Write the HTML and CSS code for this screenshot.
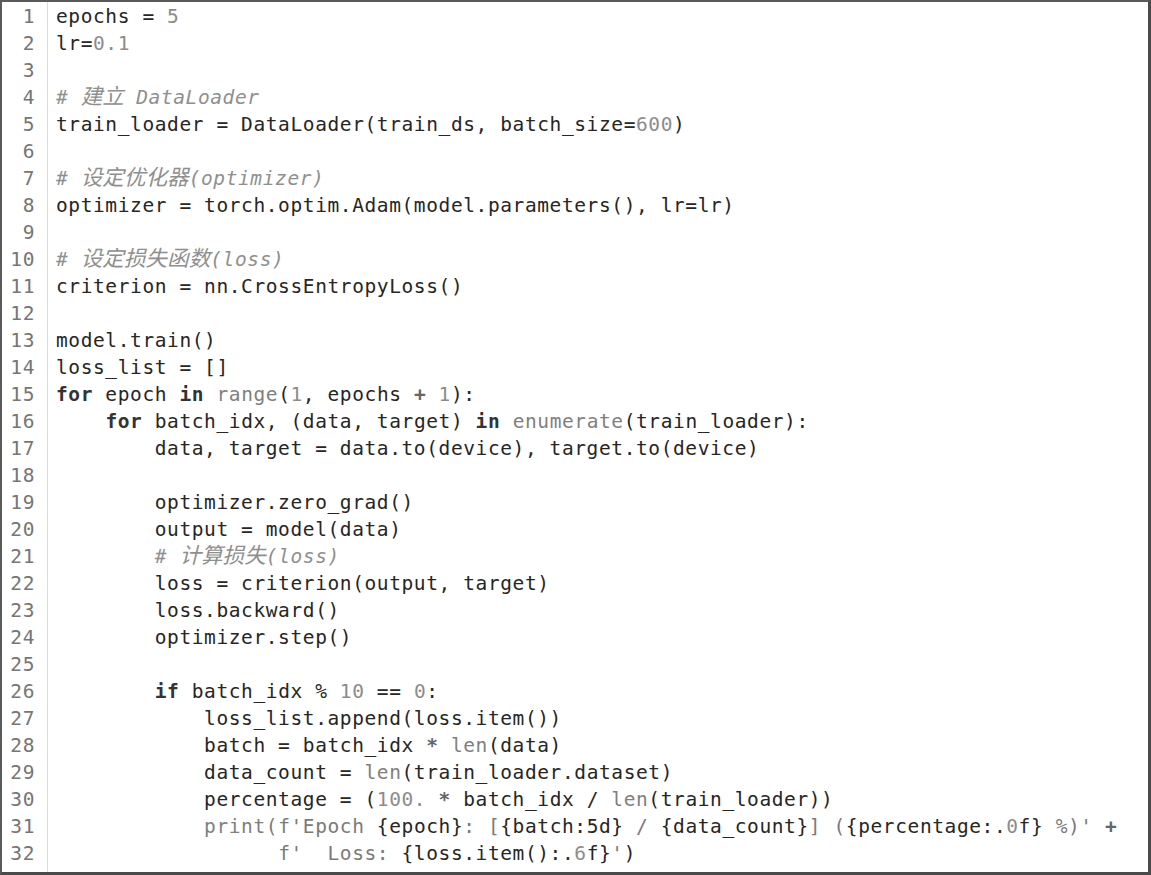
FILE: index.html
```html
<!DOCTYPE html>
<html lang="zh">
<head>
<meta charset="utf-8">
<title>code</title>
<link rel="stylesheet" href="styles.css">
</head>
<body>
<div class="frame">
  <div class="gutter">
    <div>1</div><div>2</div><div>3</div><div>4</div><div>5</div><div>6</div><div>7</div><div>8</div>
    <div>9</div><div>10</div><div>11</div><div>12</div><div>13</div><div>14</div><div>15</div><div>16</div>
    <div>17</div><div>18</div><div>19</div><div>20</div><div>21</div><div>22</div><div>23</div><div>24</div>
    <div>25</div><div>26</div><div>27</div><div>28</div><div>29</div><div>30</div><div>31</div><div>32</div>
  </div>
  <div class="code">
<div class="ln">epochs = <span class="n">5</span></div>
<div class="ln">lr=<span class="n">0.1</span></div>
<div class="ln"> </div>
<div class="ln"><span class="c"># <span class="cjk">建立</span> DataLoader</span></div>
<div class="ln">train_loader = DataLoader(train_ds, batch_size=<span class="n">600</span>)</div>
<div class="ln"> </div>
<div class="ln"><span class="c"># <span class="cjk">设定优化器</span>(optimizer)</span></div>
<div class="ln">optimizer = torch.optim.Adam(model.parameters(), lr=lr)</div>
<div class="ln"> </div>
<div class="ln"><span class="c"># <span class="cjk">设定损失函数</span>(loss)</span></div>
<div class="ln">criterion = nn.CrossEntropyLoss()</div>
<div class="ln"> </div>
<div class="ln">model.train()</div>
<div class="ln">loss_list = []</div>
<div class="ln"><span class="k">for</span> epoch <span class="k">in</span> <span class="b">range</span>(<span class="n">1</span>, epochs <span class="o">+</span> <span class="n">1</span>):</div>
<div class="ln">    <span class="k">for</span> batch_idx, (data, target) <span class="k">in</span> <span class="b">enumerate</span>(train_loader):</div>
<div class="ln">        data, target = data.to(device), target.to(device)</div>
<div class="ln"> </div>
<div class="ln">        optimizer.zero_grad()</div>
<div class="ln">        output = model(data)</div>
<div class="ln">        <span class="c"># <span class="cjk">计算损失</span>(loss)</span></div>
<div class="ln">        loss = criterion(output, target)</div>
<div class="ln">        loss.backward()</div>
<div class="ln">        optimizer.step()</div>
<div class="ln"> </div>
<div class="ln">        <span class="k">if</span> batch_idx % <span class="n">10</span> == <span class="n">0</span>:</div>
<div class="ln">            loss_list.append(loss.item())</div>
<div class="ln">            batch = batch_idx <span class="o">*</span> <span class="b">len</span>(data)</div>
<div class="ln">            data_count = <span class="b">len</span>(train_loader.dataset)</div>
<div class="ln">            percentage = (<span class="n">100.</span> <span class="o">*</span> batch_idx / <span class="b">len</span>(train_loader))</div>
<div class="ln">            <span class="b">print</span><span class="s">(f'Epoch </span>{epoch}<span class="s">: [</span>{batch:5d}<span class="s"> / </span>{data_count}<span class="s">] (</span>{percentage:.<span class="n">0</span>f}<span class="s"> %)'</span> <span class="o">+</span></div>
<div class="ln">                  <span class="s">f'  Loss: </span>{loss.item():.<span class="n">6</span>f}<span class="s">'</span>)</div>
  </div>
</div>
</body>
</html>
```

FILE: styles.css
```css
html, body {
  margin: 0;
  padding: 0;
  background: #ffffff;
}

.frame {
  box-sizing: border-box;
  width: 1151px;
  height: 875px;
  display: flex;
  border-top: 2px solid #5a5a5a;
  border-left: 2px solid #5a5a5a;
  border-right: 3px solid #4a4a4a;
  border-bottom: 3px solid #4a4a4a;
  background: #ffffff;
  font-family: "DejaVu Sans Mono", "Noto Sans CJK SC", monospace;
  font-size: 19.5px;
  letter-spacing: 0.6px;
  line-height: 27px;
  color: #262626;
}

.gutter {
  width: 46px;
  box-sizing: border-box;
  padding: 1px 12px 0 0;
  border-right: 1px solid #dcdcdc;
  text-align: right;
  color: #767676;
  flex: none;
}

.code {
  padding: 1px 0 0 8px;
  flex: 1;
}

.ln {
  height: 27px;
  white-space: pre;
}

.n { color: #8c8c8c; }
.c { color: #8f8f8f; font-style: italic; }
.cjk {
  font-family: "Noto Sans CJK SC", sans-serif;
  font-style: italic;
  font-size: 21.6px;
  letter-spacing: 0;
  line-height: 20px;
}
.k { font-weight: bold; color: #333333; }
.b { color: #808080; }
.s { color: #7a7a7a; }
.o { color: #666666; font-weight: bold; }
```
